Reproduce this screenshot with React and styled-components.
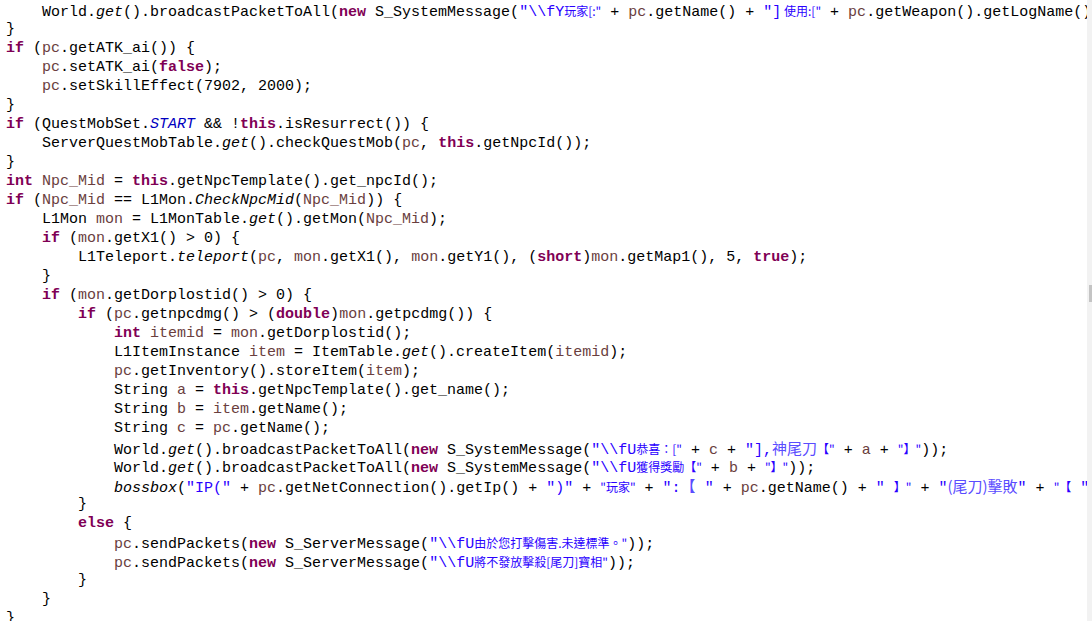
import React from "react";
import styled, { createGlobalStyle, css } from "styled-components";

const Global = createGlobalStyle`
  html, body { margin: 0; padding: 0; background: #ffffff; }
  #root { height: 621px; }
`;

const Editor = styled.div`
  display: flex;
  height: 621px;
  width: 1092px;
  overflow: hidden;
  background: #ffffff;
`;

const Code = styled.div`
  flex: 1;
  min-width: 0;
  overflow: hidden;
  padding: 1px 0 0 6px;
  font-family: "Liberation Mono", "DejaVu Sans Mono", monospace;
  font-size: 15px;
  color: #000000;
`;

const Line = styled.div`
  height: 19px;
  line-height: 19px;
  white-space: pre;
`;

const cjkFont = css`
  font-family: "Noto Sans CJK TC", "Noto Sans CJK SC", sans-serif;
`;

const Tok = styled.span`
  ${({ $t }) => {
    switch ($t) {
      case "k":
        return css`color: #7f0055; font-weight: bold;`;
      case "s":
        return css`color: #2a00ff;`;
      case "v":
        return css`color: #6a3e3e;`;
      case "f":
        return css`color: #0000c0; font-style: italic;`;
      case "i":
        return css`font-style: italic;`;
      case "c":
        return css`${cjkFont} color: #2a00ff; font-size: 12px;`;
      case "C":
        return css`${cjkFont} color: #5a4cff; font-size: 15px;`;
      default:
        return css``;
    }
  }}
`;

const ScrollTrack = styled.div`
  flex: 0 0 5px;
  background: #f2f2f2;
  display: flex;
  flex-direction: column;
  align-items: flex-end;
`;

const ScrollThumb = styled.div`
  width: 3px;
  height: 17px;
  margin-top: 285px;
  background: #c4c4c4;
`;

const I4 = "    ";
const I8 = "        ";
const I12 = "            ";

const lines = [
  [["p", I4 + "World."], ["i", "get"], ["p", "().broadcastPacketToAll("], ["k", "new"], ["p", " S_SystemMessage("], ["s", '"\\\\fY'], ["c", '玩家[:"'], ["p", " + "], ["v", "pc"], ["p", ".getName() + "], ["s", '"]'], ["c", ' 使用:["'], ["p", " + "], ["v", "pc"], ["p", ".getWeapon().getLogName());"]],
  [["p", "}"]],
  [["k", "if"], ["p", " ("], ["v", "pc"], ["p", ".getATK_ai()) {"]],
  [["p", I4], ["v", "pc"], ["p", ".setATK_ai("], ["k", "false"], ["p", ");"]],
  [["p", I4], ["v", "pc"], ["p", ".setSkillEffect(7902, 2000);"]],
  [["p", "}"]],
  [["k", "if"], ["p", " (QuestMobSet."], ["f", "START"], ["p", " && !"], ["k", "this"], ["p", ".isResurrect()) {"]],
  [["p", I4 + "ServerQuestMobTable."], ["i", "get"], ["p", "().checkQuestMob("], ["v", "pc"], ["p", ", "], ["k", "this"], ["p", ".getNpcId());"]],
  [["p", "}"]],
  [["k", "int"], ["p", " "], ["v", "Npc_Mid"], ["p", " = "], ["k", "this"], ["p", ".getNpcTemplate().get_npcId();"]],
  [["k", "if"], ["p", " ("], ["v", "Npc_Mid"], ["p", " == L1Mon."], ["i", "CheckNpcMid"], ["p", "("], ["v", "Npc_Mid"], ["p", ")) {"]],
  [["p", I4 + "L1Mon "], ["v", "mon"], ["p", " = L1MonTable."], ["i", "get"], ["p", "().getMon("], ["v", "Npc_Mid"], ["p", ");"]],
  [["p", I4], ["k", "if"], ["p", " ("], ["v", "mon"], ["p", ".getX1() > 0) {"]],
  [["p", I8 + "L1Teleport."], ["i", "teleport"], ["p", "("], ["v", "pc"], ["p", ", "], ["v", "mon"], ["p", ".getX1(), "], ["v", "mon"], ["p", ".getY1(), ("], ["k", "short"], ["p", ")"], ["v", "mon"], ["p", ".getMap1(), 5, "], ["k", "true"], ["p", ");"]],
  [["p", I4 + "}"]],
  [["p", I4], ["k", "if"], ["p", " ("], ["v", "mon"], ["p", ".getDorplostid() > 0) {"]],
  [["p", I8], ["k", "if"], ["p", " ("], ["v", "pc"], ["p", ".getnpcdmg() > ("], ["k", "double"], ["p", ")"], ["v", "mon"], ["p", ".getpcdmg()) {"]],
  [["p", I12], ["k", "int"], ["p", " "], ["v", "itemid"], ["p", " = "], ["v", "mon"], ["p", ".getDorplostid();"]],
  [["p", I12 + "L1ItemInstance "], ["v", "item"], ["p", " = ItemTable."], ["i", "get"], ["p", "().createItem("], ["v", "itemid"], ["p", ");"]],
  [["p", I12], ["v", "pc"], ["p", ".getInventory().storeItem("], ["v", "item"], ["p", ");"]],
  [["p", I12 + "String "], ["v", "a"], ["p", " = "], ["k", "this"], ["p", ".getNpcTemplate().get_name();"]],
  [["p", I12 + "String "], ["v", "b"], ["p", " = "], ["v", "item"], ["p", ".getName();"]],
  [["p", I12 + "String "], ["v", "c"], ["p", " = "], ["v", "pc"], ["p", ".getName();"]],
  [["p", I12 + "World."], ["i", "get"], ["p", "().broadcastPacketToAll("], ["k", "new"], ["p", " S_SystemMessage("], ["s", '"\\\\fU'], ["c", '恭喜：["'], ["p", " + "], ["v", "c"], ["p", " + "], ["s", '"],'], ["C", "神尾刀"], ["c", '【"'], ["p", " + "], ["v", "a"], ["p", " + "], ["c", '"】"'], ["p", "));"]],
  [["p", I12 + "World."], ["i", "get"], ["p", "().broadcastPacketToAll("], ["k", "new"], ["p", " S_SystemMessage("], ["s", '"\\\\fU'], ["c", '獲得獎勵【"'], ["p", " + "], ["v", "b"], ["p", " + "], ["c", '"】"'], ["p", "));"]],
  [["p", I12], ["i", "bossbox"], ["p", "("], ["s", '"IP("'], ["p", " + "], ["v", "pc"], ["p", ".getNetConnection().getIp() + "], ["s", '")"'], ["p", " + "], ["c", '"玩家"'], ["p", " + "], ["s", '":'], ["C", "【"], ["s", ' "'], ["p", " + "], ["v", "pc"], ["p", ".getName() + "], ["s", '" '], ["c", '】"'], ["p", " + "], ["s", '"'], ["C", "(尾刀)擊敗"], ["s", '"'], ["p", " + "], ["c", '"【'], ["s", ' " + '], ["v", "pc"]],
  [["p", I8 + "}"]],
  [["p", I8], ["k", "else"], ["p", " {"]],
  [["p", I12], ["v", "pc"], ["p", ".sendPackets("], ["k", "new"], ["p", " S_ServerMessage("], ["s", '"\\\\fU'], ["c", '由於您打擊傷害.未達標準。"'], ["p", "));"]],
  [["p", I12], ["v", "pc"], ["p", ".sendPackets("], ["k", "new"], ["p", " S_ServerMessage("], ["s", '"\\\\fU'], ["c", '將不發放擊殺[尾刀]寶相"'], ["p", "));"]],
  [["p", I8 + "}"]],
  [["p", I4 + "}"]],
  [["p", "}"]],
];

export default function App() {
  return (
    <>
      <Global />
      <Editor>
        <Code>
          {lines.map((toks, li) => (
            <Line key={li}>
              {toks.map(([t, text], ti) => (
                <Tok key={ti} $t={t}>
                  {text}
                </Tok>
              ))}
            </Line>
          ))}
        </Code>
        <ScrollTrack>
          <ScrollThumb />
        </ScrollTrack>
      </Editor>
    </>
  );
}
